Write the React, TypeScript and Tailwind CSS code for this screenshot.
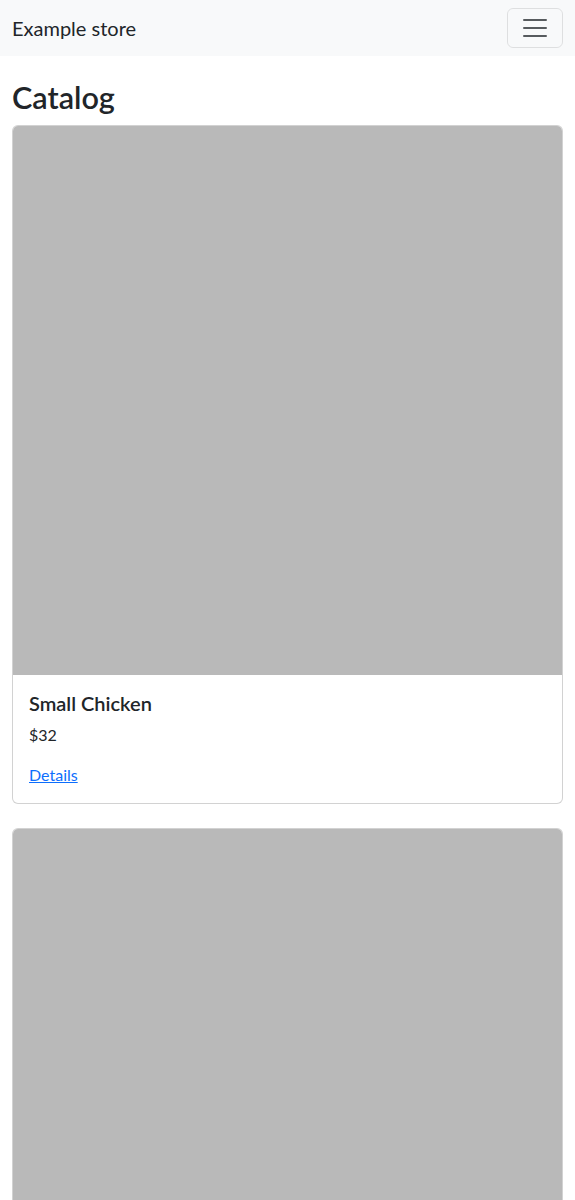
import React from 'react';

interface Product {
  id: number;
  name: string;
  price: number;
}

const products: Product[] = [
  { id: 1, name: 'Small Chicken', price: 32 },
  { id: 2, name: 'Small Chicken', price: 32 },
];

const ProductCard: React.FC<{ product: Product }> = ({ product }) => (
  <div className="mb-6 flex flex-col overflow-hidden rounded-[6px] border border-black/[0.175] bg-white">
    <div className="aspect-square w-full bg-[#b9b9b9]" />
    <div className="p-4">
      <h5 className="mb-2 text-[20px] font-semibold leading-[24px]">{product.name}</h5>
      <p className="mb-4 text-[16px] leading-[24px]">${product.price}</p>
      <a href="#" className="text-[16px] leading-[24px] text-[#0d6efd] underline">
        Details
      </a>
    </div>
  </div>
);

export default function App() {
  return (
    <div className="min-h-screen bg-white text-[#212529] [font-family:Lato,'Noto_Sans',sans-serif]">
      {/* navbar */}
      <nav className="flex h-14 items-center justify-between bg-[#f8f9fa] px-3">
        <span className="text-[20px] leading-[30px]">Example store</span>
        <button className="flex h-10 w-14 items-center justify-center rounded-[6px] border border-black/10">
          <svg width="30" height="30" viewBox="0 0 30 30" fill="none">
            <path
              d="M4 7h22M4 15h22M4 23h22"
              stroke="rgba(33,37,41,0.75)"
              strokeWidth="2"
              strokeLinecap="round"
            />
          </svg>
        </button>
      </nav>

      <main className="px-3 pt-6">
        <h1 className="mb-2 text-[30.6px] font-semibold leading-[1.2]">Catalog</h1>
        {products.map((p) => (
          <ProductCard key={p.id} product={p} />
        ))}
      </main>
    </div>
  );
}
